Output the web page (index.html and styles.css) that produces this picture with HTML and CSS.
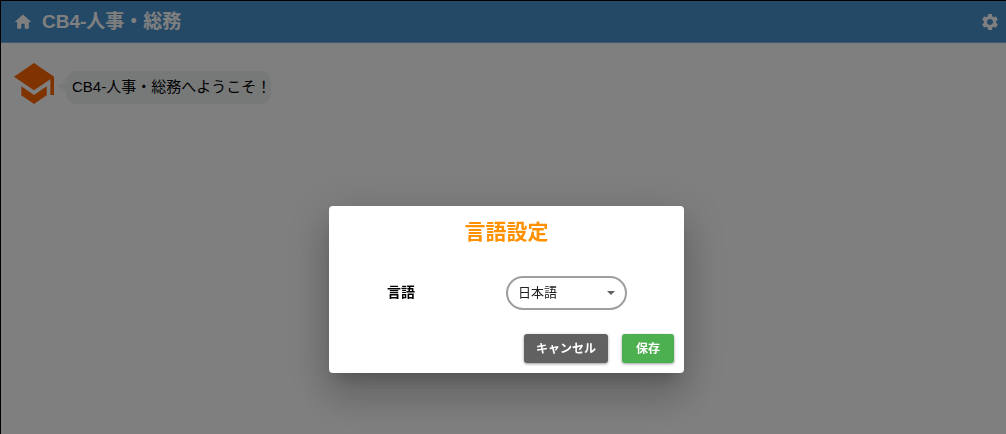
FILE: index.html
```html
<!DOCTYPE html>
<html lang="ja">
<head>
    <meta charset="UTF-8">
    <meta name="viewport" content="width=device-width, initial-scale=1.0">
    <title>CB4-人事・総務</title>
    <link rel="stylesheet" href="styles.css">
</head>
<body>

    <header class="header">
        <a href="#" class="header-icon" aria-label="ホーム">
            <svg viewBox="0 0 24 24"><path d="M10 20v-6h4v6h5v-8h3L12 3 2 12h3v8z"/></svg>
        </a>
        <h1 class="header-title">CB4-人事・総務</h1>
        <button type="button" class="header-icon" aria-label="設定">
            <svg viewBox="0 0 24 24"><path d="M19.14 12.94c.04-.3.06-.61.06-.94 0-.32-.02-.64-.07-.94l2.03-1.58c.18-.14.23-.41.12-.61l-1.92-3.32c-.12-.22-.37-.29-.59-.22l-2.39.96c-.5-.38-1.03-.7-1.62-.94l-.36-2.54c-.04-.24-.24-.41-.48-.41h-3.84c-.24 0-.43.17-.47.41l-.36 2.54c-.59.24-1.13.57-1.62.94l-2.39-.96c-.22-.08-.47 0-.59.22L2.74 8.87c-.12.21-.08.47.12.61l2.03 1.58c-.05.3-.09.63-.09.94s.02.64.07.94l-2.03 1.58c-.18.14-.23.41-.12.61l1.92 3.32c.12.22.37.29.59.22l2.39-.96c.5.38 1.03.7 1.62.94l.36 2.54c.05.24.24.41.48.41h3.84c.24 0 .44-.17.47-.41l.36-2.54c.59-.24 1.13-.56 1.62-.94l2.39.96c.22.08.47 0 .59-.22l1.92-3.32c.12-.22.07-.47-.12-.61l-2.01-1.58zM12 15.6c-1.98 0-3.6-1.62-3.6-3.6s1.62-3.6 3.6-3.6 3.6 1.62 3.6 3.6-1.62 3.6-3.6 3.6z"/></svg>
        </button>
    </header>

    <main class="chat">
        <svg class="bot-icon" viewBox="1 3 22 18" preserveAspectRatio="none"><path d="M5 13.18v4L12 21l7-3.82v-4L12 17l-7-3.82zM12 3L1 9l11 6 9-4.91V17h2V9L12 3z"/></svg>
        <p class="bubble">CB4-人事・総務へようこそ！</p>
    </main>

    <div class="overlay">
        <form class="dialog" role="dialog" aria-labelledby="dialog-title">
            <h2 class="dialog-title" id="dialog-title">言語設定</h2>
            <div class="field">
                <label for="language">言語</label>
                <div class="select-box">
                    <select id="language">
                        <option selected>日本語</option>
                        <option>English</option>
                    </select>
                    <svg class="arrow" viewBox="0 0 10 5"><path d="M0 0l5 5 5-5z"/></svg>
                </div>
            </div>
            <div class="actions">
                <button type="button" class="btn btn-cancel">キャンセル</button>
                <button type="button" class="btn btn-save">保存</button>
            </div>
        </form>
    </div>

</body>
</html>
```

FILE: styles.css
```css
* {
    margin: 0;
    padding: 0;
    box-sizing: border-box;
    font-family: "Liberation Sans", "Noto Sans CJK JP", sans-serif;
}

body {
    min-height: 100vh;
    background: white;
    border-top: 1px solid black;
    border-left: 1px solid black;
}

/* Header */
.header {
    display: flex;
    align-items: center;
    height: 42px;
    padding: 0 6px 0 12px;
    background: #4992cf;
    border-bottom: 1px solid #7fb0da;
    color: white;
}

.header-icon {
    display: block;
    width: 20px;
    height: 20px;
    background: none;
    border: none;
    color: white;
}

.header-icon svg {
    display: block;
    width: 100%;
    height: 100%;
    fill: currentColor;
}

.header-title {
    flex: 1;
    margin-left: 9px;
    font-size: 19px;
    line-height: 28px;
}

/* Chat */
.chat {
    display: flex;
    align-items: center;
    gap: 12px;
    padding: 20px 13px;
}

.bot-icon {
    width: 40px;
    height: 41px;
    fill: #ff6600;
}

.bubble {
    position: relative;
    margin-top: 8px;
    padding: 4px 0 6px 6px;
    width: 205px;
    background: #eef1f1;
    border-radius: 10px;
    font-size: 15px;
    line-height: 23px;
    white-space: nowrap;
}

.bubble::before {
    content: "";
    position: absolute;
    top: 10px;
    left: -9px;
    border: 5px solid transparent;
    border-left: none;
    border-right: 9px solid #eef1f1;
}

/* Dialog */
.overlay {
    position: fixed;
    inset: 0;
    display: flex;
    justify-content: center;
    align-items: flex-start;
    padding: 206px 0 0 7px;
    background: rgba(0, 0, 0, 0.5);
}

.dialog {
    width: 355px;
    padding: 12px 10px 10px;
    background: white;
    border-radius: 4px;
    box-shadow: 0 11px 15px -7px rgba(0, 0, 0, 0.2),
        0 24px 38px 3px rgba(0, 0, 0, 0.14),
        0 9px 46px 8px rgba(0, 0, 0, 0.12);
}

.dialog-title {
    color: #ff9100;
    font-size: 21px;
    line-height: 28px;
    text-align: center;
}

.field {
    display: flex;
    align-items: center;
    justify-content: space-between;
    margin: 30px 47px 24px 48px;
}

.field label {
    padding-bottom: 4px;
    font-size: 14px;
    font-weight: bold;
}

.select-box {
    position: relative;
    width: 121px;
}

.select-box select {
    display: block;
    width: 100%;
    height: 34px;
    padding: 0 24px 2px 10px;
    appearance: none;
    background: white;
    border: 2px solid #9e9e9e;
    border-radius: 17px;
    color: #212121;
    font-size: 13px;
}

.arrow {
    position: absolute;
    top: 15px;
    right: 12px;
    width: 8px;
    height: 4px;
    fill: #616161;
    pointer-events: none;
}

.actions {
    display: flex;
    justify-content: flex-end;
    gap: 14px;
}

.btn {
    height: 29px;
    padding: 0 12px 2px;
    border: none;
    border-radius: 3px;
    color: white;
    font-size: 12px;
    font-weight: bold;
    box-shadow: 0 1px 3px rgba(0, 0, 0, 0.4);
}

.btn-cancel {
    background: #616161;
}

.btn-save {
    min-width: 52px;
    background: #4caf50;
}
```
